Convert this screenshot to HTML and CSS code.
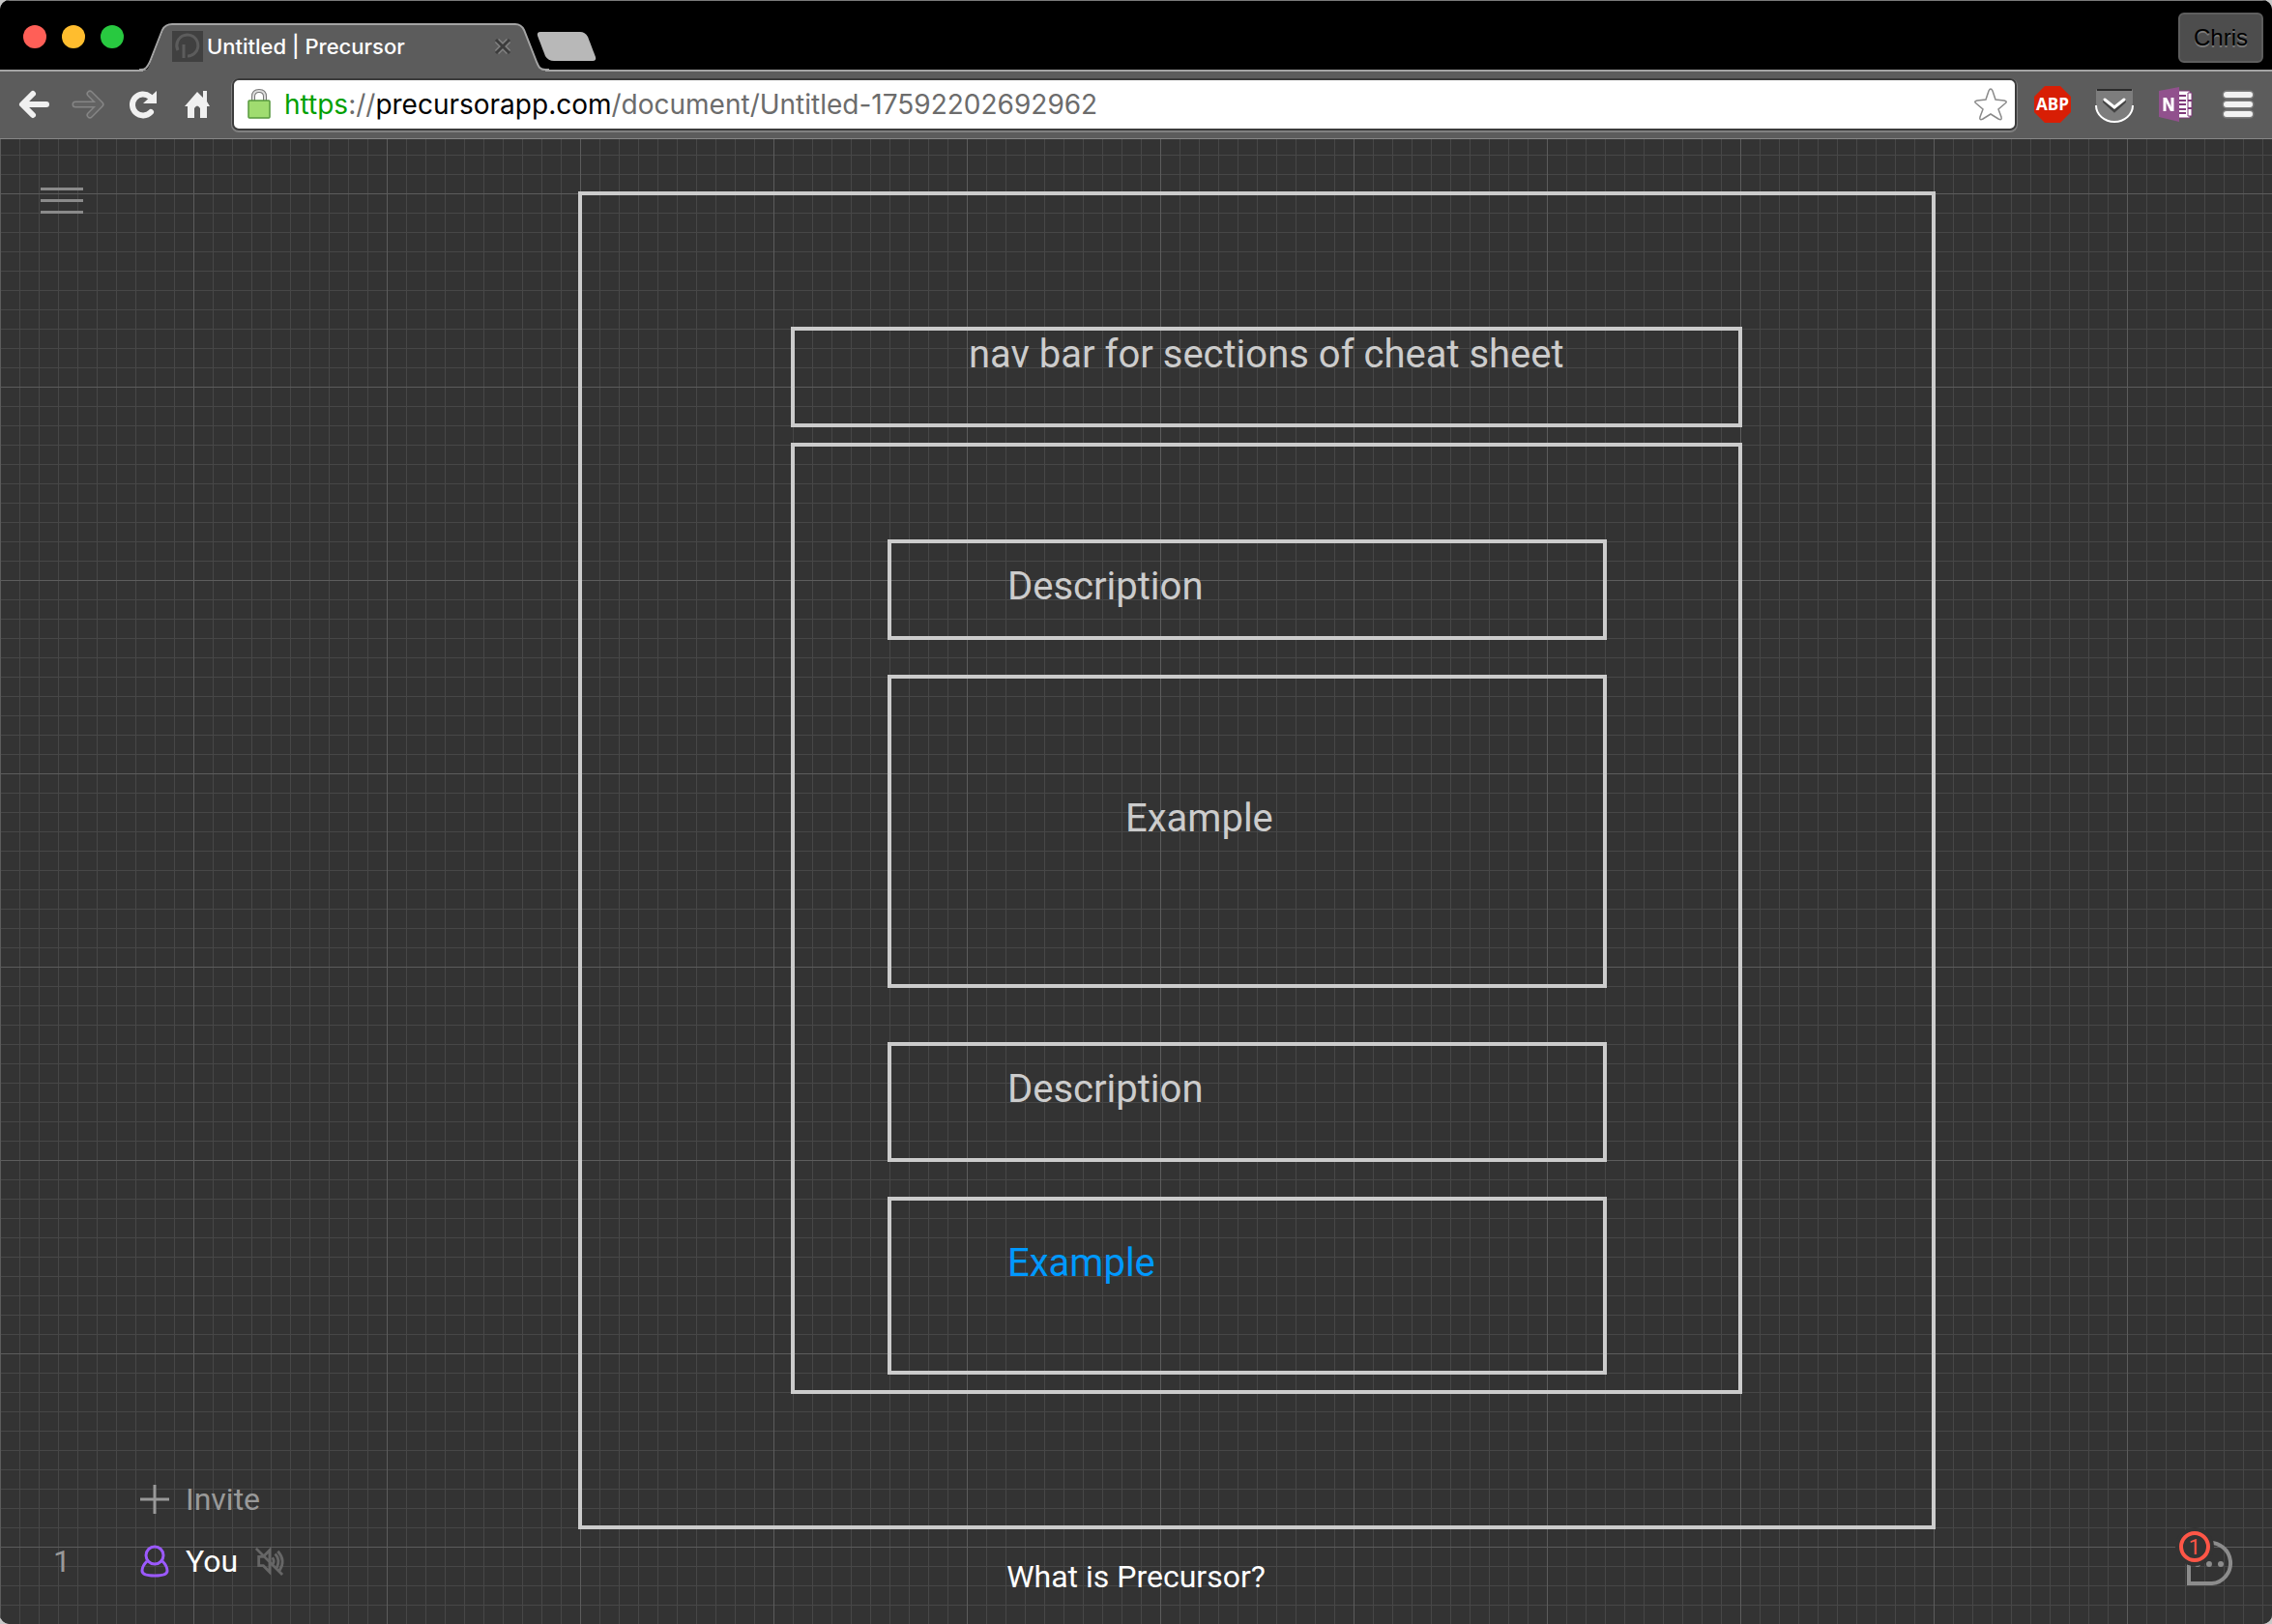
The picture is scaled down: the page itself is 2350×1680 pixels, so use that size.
FILE: index.html
```html
<!DOCTYPE html>
<html lang="en">
<head>
<meta charset="utf-8">
<title>Untitled | Precursor</title>
<link rel="stylesheet" href="styles.css">
</head>
<body>
<div class="window">
  <header class="tabstrip">
    <div class="lights">
      <button class="light light-red" aria-label="Close window"></button>
      <button class="light light-yellow" aria-label="Minimise window"></button>
      <button class="light light-green" aria-label="Zoom window"></button>
    </div>
    <div class="tab">
      <svg class="tab-shape" viewBox="0 0 420 50" aria-hidden="true">
        <path d="M0 49 C5 49 6 45 8 40 L21 7 Q24 1 30 1 H385 Q391 1 394 7 L407 40 C409 45 410 49 416 49 V50 H0Z" fill="#5c5c5c"/>
        <path d="M-4 48 C3 49 5 44 7 40 L20 7 Q23 1 30 1 H385 Q391 1 394 7 L407 40 C409 45 410 48 416 48 H420" fill="none" stroke="#a4a4a4" stroke-width="2"/>
      </svg>
      <div class="tab-content">
        <svg class="favicon" viewBox="0 0 32 32" aria-hidden="true"><rect width="32" height="32" fill="#404040"/><path d="M6 20 A11 11 0 1 1 16 26 M12 14 V28" fill="none" stroke="#5c5c5c" stroke-width="3"/></svg>
        <span class="tab-title">Untitled | Precursor</span>
        <button class="tab-close" aria-label="Close tab"><svg viewBox="0 0 20 20"><path d="M4 4 L16 16 M16 4 L4 16" stroke="#828282" stroke-width="6"/><path d="M3 3 L17 17 M17 3 L3 17" stroke="#3c3c3c" stroke-width="3"/></svg></button>
      </div>
    </div>
    <button class="new-tab" aria-label="New tab"><svg viewBox="0 0 62 30"><path d="M4 0 H45 Q50 0 53 5 L61 26 Q62 30 58 30 H18 Q12 30 9 25 L1 4 Q0 0 4 0Z" fill="#b8b8b8"/></svg></button>
    <button class="profile">Chris</button>
  </header>

  <nav class="toolbar" aria-label="Browser">
    <div class="nav-buttons">
      <button aria-label="Back"><svg viewBox="0 0 36 36"><path d="M16 7 L5 18 L16 29 M6 18 H30" fill="none" stroke="#f0f0f0" stroke-width="6" stroke-linecap="round" stroke-linejoin="round"/></svg></button>
      <button aria-label="Forward"><svg viewBox="0 0 36 36"><path d="M19 7 L30 18 L19 29 M29 18 H4" fill="none" stroke="#858585" stroke-width="7" stroke-linecap="round" stroke-linejoin="round"/><path d="M19 7 L30 18 L19 29 M29 18 H4" fill="none" stroke="#636363" stroke-width="4" stroke-linecap="round" stroke-linejoin="round"/></svg></button>
      <button aria-label="Reload"><svg viewBox="0 0 36 36"><path d="M26 26 A11 11 0 1 1 25 10" fill="none" stroke="#f0f0f0" stroke-width="6" stroke-linecap="round"/><path d="M32 4 V17 H18Z" fill="#f0f0f0"/></svg></button>
      <button aria-label="Home"><svg viewBox="0 0 36 36"><path d="M18 5 L24 11 V4 H28 V15 L31 20 H28 V32 H21 V22 Q18 17 15 22 V32 H8 V20 H5Z" fill="#f0f0f0"/></svg></button>
    </div>
    <div class="address">
      <svg class="lock" viewBox="0 0 24 32" aria-hidden="true"><path d="M6 13 V8 Q6 2 12 2 Q18 2 18 8 V13" fill="none" stroke="#777" stroke-width="4"/><path d="M6 13 V8 Q6 2 12 2 Q18 2 18 8 V13" fill="none" stroke="#ddd" stroke-width="2"/><rect x="1" y="12" width="22" height="18" rx="1" fill="#a0dc70" stroke="#56983c" stroke-width="1.5"/></svg>
      <a class="url" href="#"><span class="url-scheme">https</span><span class="url-dim">://</span>precursorapp.com<span class="url-dim">/document/Untitled-17592202692962</span></a>
      <button class="star" aria-label="Bookmark"><svg viewBox="0 0 36 36"><path d="M18 2 Q19 2 20 4 L23 13 L32 14 Q36 15 33 17 L26 23 L29 31 Q30 35 26 33 L18 28 L10 33 Q6 35 7 31 L10 23 L3 17 Q0 15 4 14 L13 13 L16 4 Q17 2 18 2Z" fill="#fff" stroke="#8a8a8a" stroke-width="1.5"/></svg></button>
    </div>
    <div class="extensions">
      <button aria-label="Adblock Plus"><svg viewBox="0 0 38 38"><path d="M11 0 H27 L38 11 V27 L27 38 H11 L0 27 V11Z" fill="#d81e05"/><text x="19" y="25" text-anchor="middle" class="abp">ABP</text></svg></button>
      <button aria-label="Pocket"><svg viewBox="0 0 38 38"><path d="M2 3 H36 Q38 3 38 5 V18 A19 18 0 0 1 0 18 V5 Q0 3 2 3Z" fill="#7d7d7d"/><path d="M0 20 A19 17 0 0 0 38 20" fill="none" stroke="#fff" stroke-width="2"/><path d="M1 4 H37" stroke="#2c2c2c" stroke-width="2"/><path d="M9 16 L19 25 L29 16" fill="none" stroke="#444" stroke-width="4" stroke-linecap="round"/><path d="M9 14 L19 22 L29 14" fill="none" stroke="#fff" stroke-width="3" stroke-linecap="round"/></svg></button>
      <button aria-label="OneNote"><svg viewBox="0 0 38 38"><path d="M20 5 H33 V33 H20Z" fill="#fff" stroke="#80397b" stroke-width="1"/><path d="M31 7 H35 V31 H31Z" fill="#fff" stroke="#80397b" stroke-width="1"/><path d="M31 15 H35 M31 23 H35 M20 10 H29 M20 15 H29 M20 19 H29 M20 24 H29 M20 28 H29" stroke="#80397b" stroke-width="2"/><path d="M1 5 L22 1 V37 L1 32Z" fill="#91518d"/><path d="M7 26 V12 M15 26 V12" fill="none" stroke="#fff" stroke-width="3"/><path d="M6 12 H9 L16 26 H13Z" fill="#fff"/></svg></button>
      <button aria-label="Menu"><svg viewBox="0 0 38 38"><path d="M7 9 H31 M7 19 H31 M7 29 H31" stroke="#7c7c7c" stroke-width="9" stroke-linecap="round"/><path d="M7 9 H31 M7 19 H31 M7 29 H31" stroke="#f2f2f2" stroke-width="6" stroke-linecap="round"/></svg></button>
    </div>
  </nav>

  <main class="canvas">
    <button class="app-menu" aria-label="Main menu"><span></span><span></span><span></span></button>

    <section class="drawing" aria-label="Drawing">
      <div class="shape shape-page"></div>
      <div class="shape shape-nav"></div>
      <div class="shape shape-body"></div>
      <div class="shape shape-desc-1"></div>
      <div class="shape shape-example-1"></div>
      <div class="shape shape-desc-2"></div>
      <div class="shape shape-example-2"></div>
      <p class="label label-nav">nav bar for sections of cheat sheet</p>
      <p class="label label-desc-1">Description</p>
      <p class="label label-example-1">Example</p>
      <p class="label label-desc-2">Description</p>
      <p class="label label-example-2">Example</p>
    </section>

    <footer class="bottom">
      <div class="people">
        <span class="count">1</span>
        <div class="people-list">
          <button class="person invite"><svg viewBox="0 0 30 30"><path d="M15 0 V30 M0 15 H30" stroke="#999" stroke-width="3"/></svg><span>Invite</span></button>
          <div class="person">
            <svg viewBox="0 0 30 32"><circle cx="15" cy="10" r="9" fill="none" stroke="#9b59ff" stroke-width="3"/><path d="M7 16 C4 19 2 23 2 26 C2 29 6 31 15 31 C24 31 28 29 28 26 C28 23 26 19 23 16" fill="none" stroke="#9b59ff" stroke-width="3"/></svg>
            <span>You</span>
            <button class="mute" aria-label="Unmute"><svg viewBox="0 0 32 32"><path d="M2 2 L31 31 M5 11 H10 L17 4 V28 L10 21 H5Z M20 12 Q23 16 20 20 M23 8 Q29 14 25 23 M26 5 Q35 15 28 26" fill="none" stroke="#666" stroke-width="3"/></svg></button>
          </div>
        </div>
      </div>
      <a class="about" href="#">What is Precursor?</a>
      <button class="chat" aria-label="Chat, 1 unread"><svg viewBox="0 0 56 60">
        <path d="M30 12 A21 21 0 0 1 34 54 H10 V30" fill="none" stroke="#8c8c8c" stroke-width="4"/>
        <g fill="#8c8c8c"><circle cx="19" cy="34" r="3"/><circle cx="31" cy="34" r="3"/><circle cx="43" cy="34" r="3"/></g>
        <circle cx="16" cy="16" r="20" fill="#333"/><circle cx="16" cy="16" r="14" fill="#333" stroke="#ff5647" stroke-width="4"/>
        <text x="16" y="24" text-anchor="middle" class="badge">1</text></svg></button>
    </footer>
  </main>
</div>
</body>
</html>
```
FILE: styles.css
```css
* { box-sizing: border-box; }
html { background: #c8c8c8; }
body { margin: 0; font-family: Roboto, sans-serif; }
p { margin: 0; }
a { color: inherit; text-decoration: none; }
button { margin: 0; padding: 0; border: 0; background: none; color: inherit; font: inherit; cursor: pointer; }
svg { display: block; overflow: visible; }

.window { display: flex; flex-direction: column; min-height: 100vh; border-radius: 10px; overflow: hidden; background: #333; }

/* Tab strip */
.tabstrip { display: flex; height: 74px; background: #000; border-top: 1px solid #7a7a7a; border-bottom: 2px solid #a4a4a4; }
.lights { display: flex; gap: 16px; padding: 25px 0 0 24px; width: 148px; }
.light { width: 24px; height: 24px; border-radius: 50%; }
.light-red { background: #ff5f57; }
.light-yellow { background: #ffbd2e; }
.light-green { background: #28c940; }
.tab { display: grid; width: 412px; padding-top: 23px; }
.tab-shape { grid-area: 1 / 1; width: 420px; height: 50px; }
.tab-content { grid-area: 1 / 1; display: flex; align-items: center; gap: 4px; height: 48px; padding: 0 38px 0 30px; z-index: 1; }
.favicon { width: 32px; height: 32px; }
.tab-title { flex: 1; color: #fff; font: 500 22px Inter, sans-serif; }
.tab-close svg { width: 20px; height: 20px; }
.new-tab { align-self: flex-start; margin-top: 32px; margin-left: -5px; }
.new-tab svg { width: 62px; height: 30px; }
.profile { align-self: flex-start; margin: 12px 9px 0 auto; width: 88px; height: 52px; border: 2px solid #5e5e5e; border-radius: 6px; background: #4d4d4d; color: #000; font: 24px "Liberation Sans", sans-serif; text-shadow: 0 2px 0 #7a7a7a; }

/* Toolbar */
.toolbar { display: flex; align-items: center; height: 70px; padding: 0 16px 2px 18px; background: #5c5c5c; border-bottom: 1px solid #868686; }
.nav-buttons { display: flex; gap: 20px; margin-right: 18px; }
.nav-buttons svg { width: 36px; height: 36px; }
.address { flex: 1; display: flex; align-items: center; height: 54px; padding: 0 7px 0 14px; border: 2px solid #3c3c3c; border-radius: 7px; background: #fff; box-shadow: 0 1px 0 1px #808080; }
.lock { width: 24px; height: 32px; margin-right: 14px; }
.url { flex: 1; color: #000; font: 28px Inter, sans-serif; }
.url-scheme { color: #00a000; }
.url-dim { color: #6c6c6c; }
.star svg { width: 36px; height: 36px; }
.extensions { display: flex; gap: 26px; margin-left: 18px; }
.extensions svg { width: 38px; height: 38px; }
.abp { font: bold 17px "Open Sans", sans-serif; fill: #fff; }

/* Document canvas: 20px cells, heavier line every 200px */
.canvas {
  position: relative; flex: 1; display: flex; flex-direction: column; justify-content: space-between;
  background-color: #333;
  background-image:
    linear-gradient(#5c5c5c 1px, transparent 1px),
    linear-gradient(90deg, #5c5c5c 1px, transparent 1px),
    linear-gradient(#474747 1px, transparent 1px),
    linear-gradient(90deg, #474747 1px, transparent 1px);
  background-size: 200px 200px, 200px 200px, 20px 20px, 20px 20px;
  background-position: 0 56px, 0 0, 0 16px, 0 0;
}
.app-menu { display: flex; flex-direction: column; gap: 9px; width: 44px; margin: 50px 0 0 42px; z-index: 1; }
.app-menu span { height: 3px; background: #8a8a8a; }

.drawing { position: absolute; inset: 0; }
.shape { position: absolute; border: 4px solid #ccc; }
.shape-page { left: 598px; top: 54px; width: 1404px; height: 1384px; }
.shape-nav { left: 818px; top: 194px; width: 984px; height: 104px; }
.shape-body { left: 818px; top: 314px; width: 984px; height: 984px; }
.shape-desc-1 { left: 918px; top: 414px; width: 744px; height: 104px; }
.shape-example-1 { left: 918px; top: 554px; width: 744px; height: 324px; }
.shape-desc-2 { left: 918px; top: 934px; width: 744px; height: 124px; }
.shape-example-2 { left: 918px; top: 1094px; width: 744px; height: 184px; }
.label { position: absolute; color: #ccc; font-size: 40px; line-height: 48px; white-space: nowrap; }
.label-nav { left: 1002px; top: 199px; }
.label-desc-1 { left: 1042px; top: 439px; }
.label-example-1 { left: 1164px; top: 679px; }
.label-desc-2 { left: 1042px; top: 959px; }
.label-example-2 { left: 1042px; top: 1139px; color: #0099ff; }

/* Bottom bar */
.bottom { display: grid; grid-template-columns: 1fr auto 1fr; align-items: end; padding: 0 40px 29px; color: #fff; font-size: 32px; line-height: 40px; z-index: 1; }
.people { display: flex; align-items: flex-end; gap: 72px; padding: 0 0 16px 15px; }
.count { color: #999; }
.people-list { display: flex; flex-direction: column; gap: 24px; }
.person { display: flex; align-items: center; gap: 17px; }
.person svg { width: 30px; height: 32px; }
.invite { color: #999; }
.invite svg { height: 30px; }
.about { justify-self: center; }
.chat { justify-self: end; padding-bottom: 7px; }
.chat svg { width: 56px; height: 60px; }
.badge { font: 22px Roboto, sans-serif; fill: #ff5647; }
```
